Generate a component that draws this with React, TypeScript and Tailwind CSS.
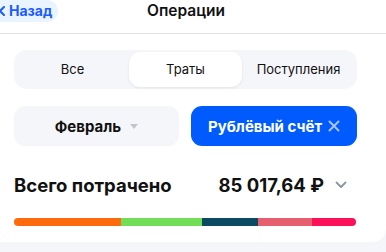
import React from "react";

const segs = [
  { w: 107, c: "#ff6a0f" },
  { w: 81, c: "#72dd57" },
  { w: 56, c: "#0b4a60" },
  { w: 54, c: "#e55f6f" },
  { w: 44, c: "#fb1158" },
];

export default function App() {
  return (
    <div
      className="w-[386px] h-[252px] bg-[#f5f6fa] overflow-hidden text-[#111]"
      style={{ fontFamily: "Inter, 'Noto Sans', sans-serif" }}
    >
      <div className="bg-white rounded-br-[14px] pb-[16px]">
        <div className="h-[34px] border-b border-[#e3e3e9] flex items-start">
          <div className="h-[22px] w-[58px] bg-[#eaf4ff] rounded-r-[11px] flex items-center pl-[1px] gap-[4px] text-[#1a5cff]">
            <svg width="6" height="10" viewBox="0 0 6 10" className="-ml-[2px]">
              <path d="M5 1 L1 5 L5 9" stroke="#1a5cff" strokeWidth="2" fill="none" strokeLinecap="round" strokeLinejoin="round" />
            </svg>
            <span className="text-[14px] font-bold leading-none">Назад</span>
          </div>
          <div className="ml-[89px] h-[22px] flex items-center text-[15.5px] font-semibold leading-none">Операции</div>
        </div>

        <div className="px-[14px]">
          <div className="mt-[16px] w-[343px] h-[39px] bg-[#f5f6f9] rounded-[13px] flex items-center p-[2px] text-[13px] leading-none">
            <div className="w-[113px] h-full flex items-center justify-center">Все</div>
            <div className="w-[113px] h-full flex items-center justify-center bg-white rounded-[11px] shadow-[0_1px_3px_rgba(0,0,0,0.08)]">Траты</div>
            <div className="flex-1 h-full flex items-center justify-center">Поступления</div>
          </div>

          <div className="mt-[17px] flex gap-[12px] w-[343px]">
            <div className="w-[165px] h-[40px] bg-[#f5f6f9] rounded-[11px] flex items-center justify-center gap-[9px] text-[15px] font-bold leading-none">
              <span>Февраль</span>
              <svg width="8" height="5" viewBox="0 0 8 5">
                <path d="M0 0 L8 0 L4 5 Z" fill="#c2c6cc" />
              </svg>
            </div>
            <div className="w-[166px] h-[40px] bg-[#005bff] rounded-[11px] flex items-center justify-center gap-[6px] text-[15px] font-bold leading-none text-white">
              <span>Рублёвый счёт</span>
              <svg width="12" height="12" viewBox="0 0 12 12">
                <path d="M1.5 1.5 L10.5 10.5 M10.5 1.5 L1.5 10.5" stroke="#a9c3ff" strokeWidth="2" strokeLinecap="round" />
              </svg>
            </div>
          </div>

          <div className="mt-[26px] w-[343px] flex items-center h-[26px]">
            <span className="text-[18.5px] font-bold leading-none">Всего потрачено</span>
            <span className="ml-auto text-[18.5px] font-bold leading-none">85 017,64 ₽</span>
            <svg width="12" height="8" viewBox="0 0 12 8" className="ml-[11px] mr-[10px]">
              <path d="M1.5 1.5 L6 6 L10.5 1.5" stroke="#8f959e" strokeWidth="1.8" fill="none" strokeLinecap="round" strokeLinejoin="round" />
            </svg>
          </div>

          <div className="mt-[20px] w-[342px] h-[8px] rounded-full overflow-hidden flex">
            {segs.map((s, i) => (
              <div key={i} className="h-full" style={{ width: s.w, background: s.c }} />
            ))}
          </div>
        </div>
      </div>
    </div>
  );
}
